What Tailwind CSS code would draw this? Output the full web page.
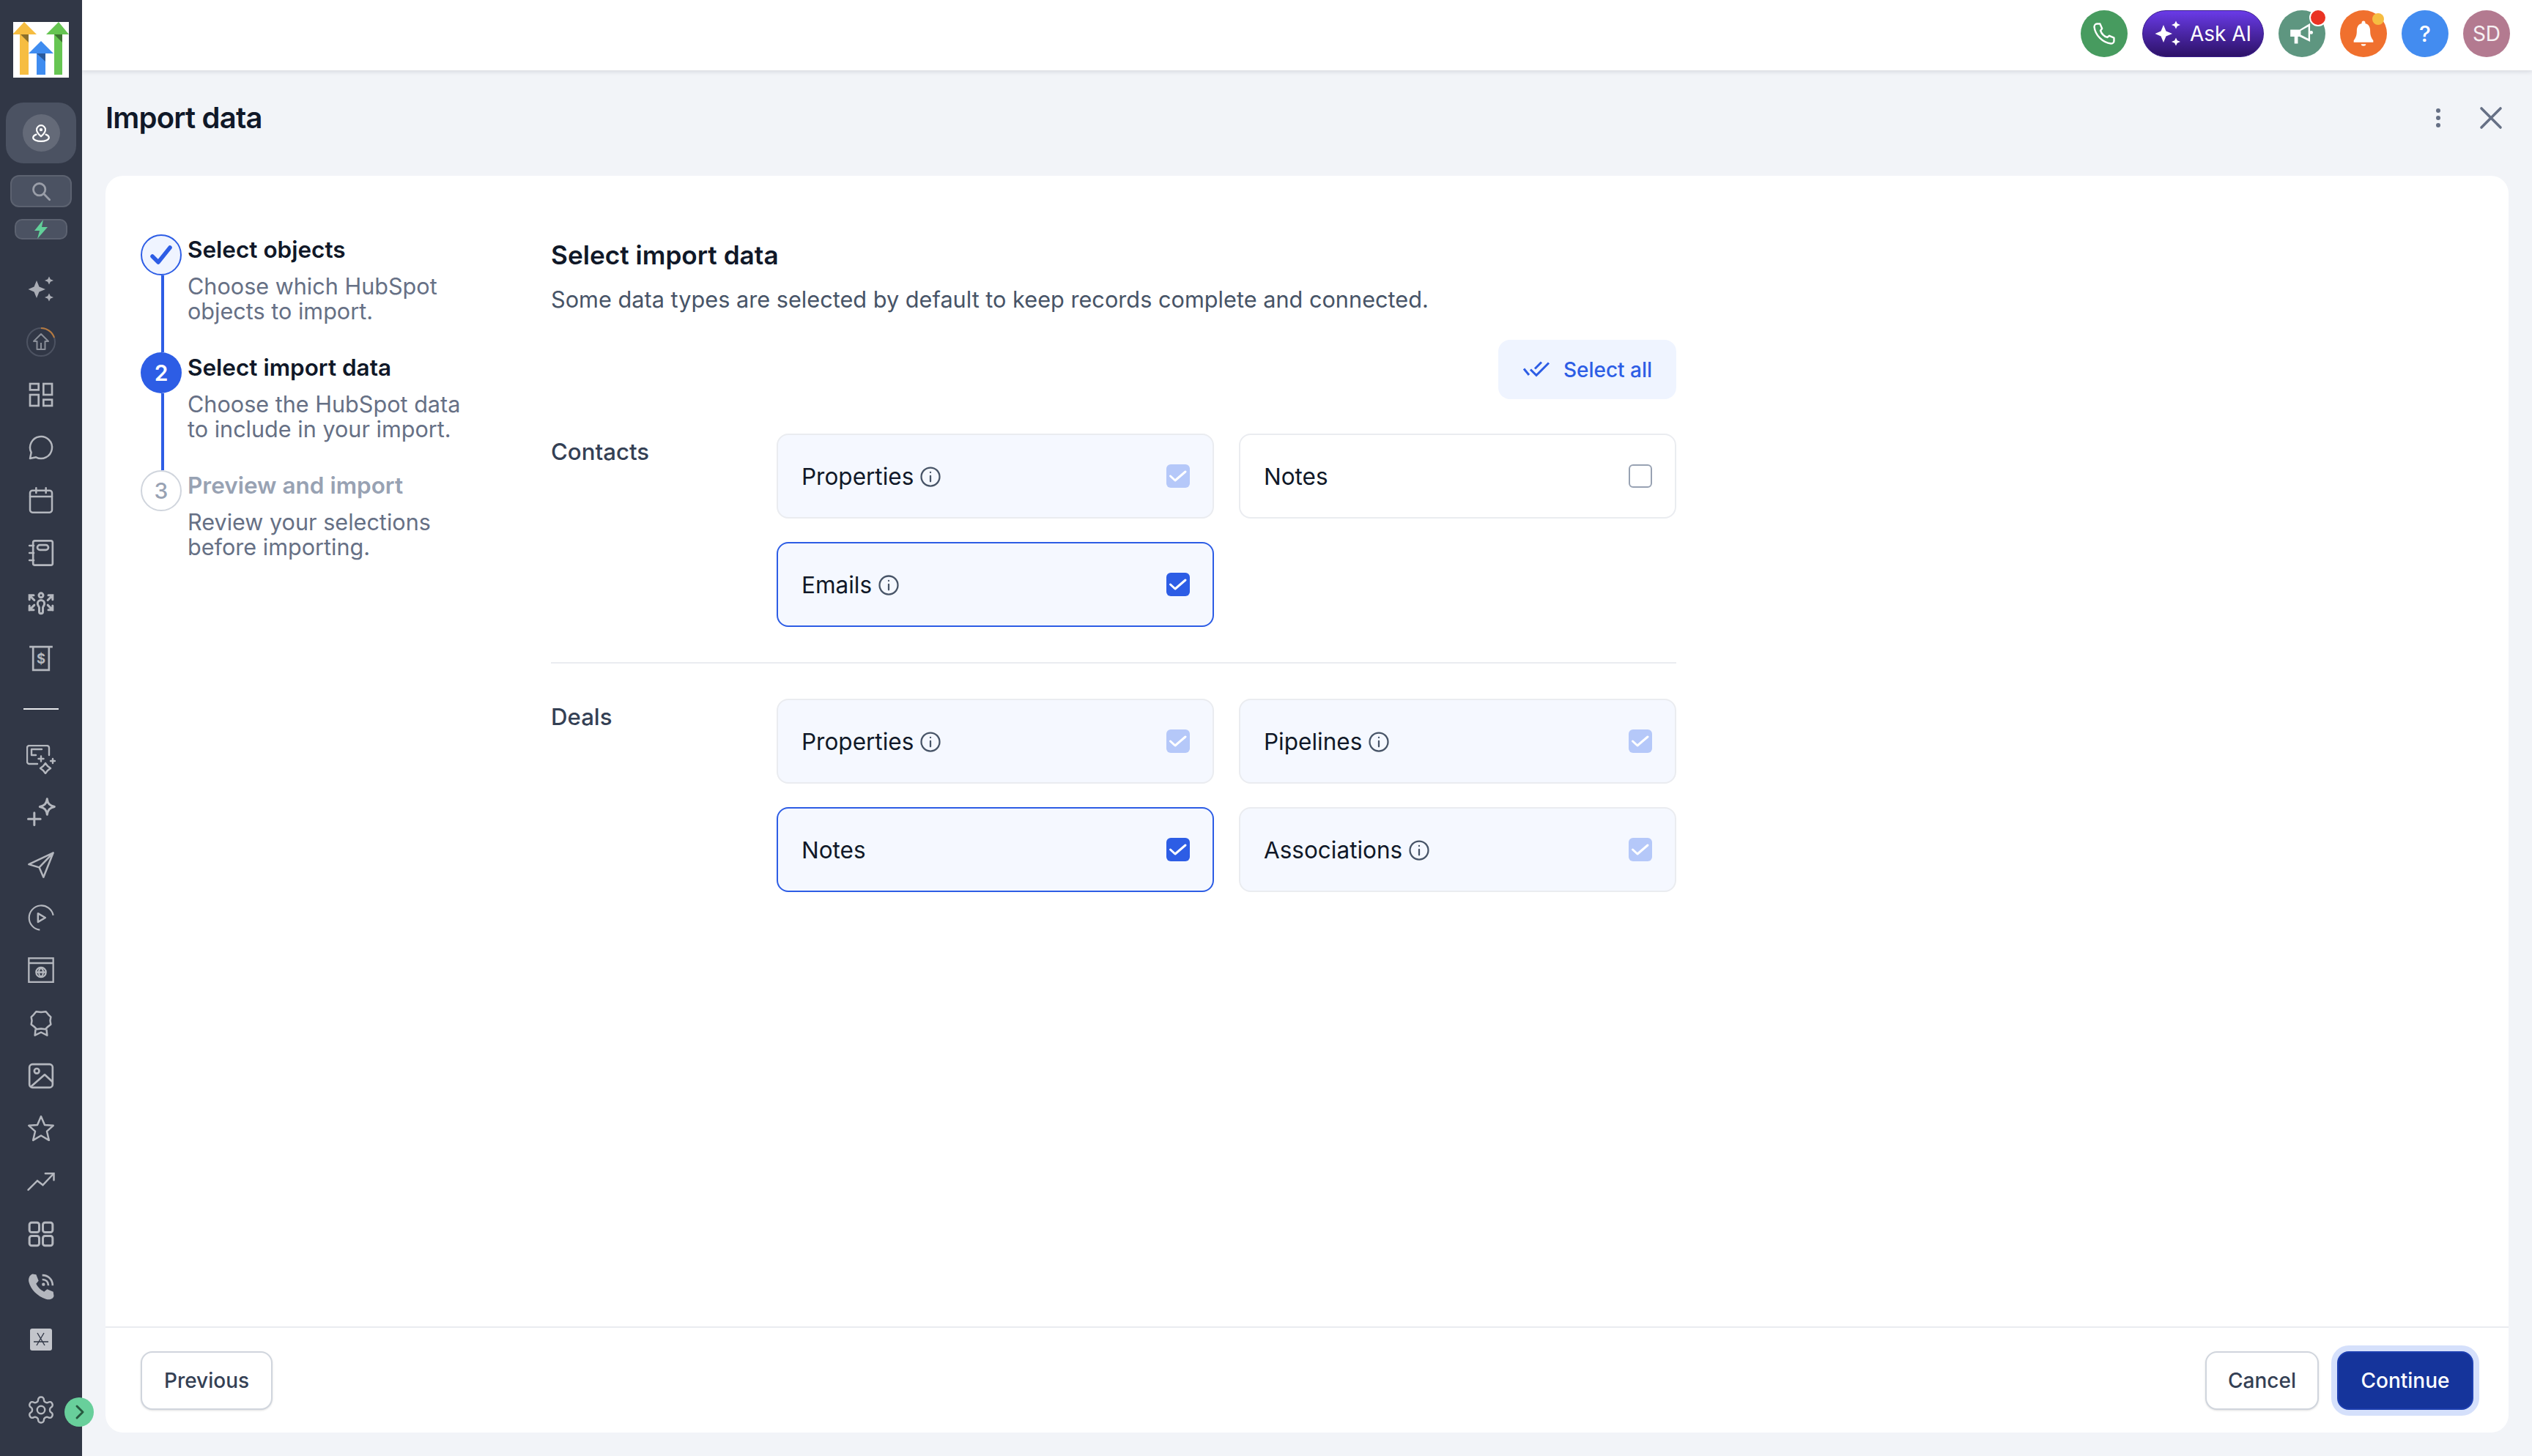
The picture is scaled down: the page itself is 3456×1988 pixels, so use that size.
<!DOCTYPE html>
<html lang="en">
<head>
  <meta charset="UTF-8" />
  <title>Import data</title>
  <script src="https://cdn.jsdelivr.net/npm/@tailwindcss/browser@4"></script>
</head>
<body class="w-[3456px] h-[1988px] overflow-hidden flex bg-[#f2f4f8] font-['Inter',sans-serif] text-[#101828]">

  <!-- sidebar -->
  <aside class="relative w-[112px] h-full shrink-0 bg-[#313746] flex flex-col items-center text-[#b4b7be]">
    <svg class="mt-[30px] w-[76px] h-[76px] shrink-0" viewBox="0 0 76 76">
      <rect width="76" height="76" fill="#fff"/>
      <path d="M15 0 L32 17 H21 V72 H9 V17 H-1 Z" fill="#f6bd41"/>
      <path d="M10 17 H21 V28 Z" fill="#8a6f2c"/>
      <path d="M38 26 L55 43 H44 V72 H32 V43 H21 Z" fill="#3f8cf0"/>
      <path d="M32 43 H44 V54 Z" fill="#2a5a9c"/>
      <path d="M62 0 L76 17 H67 V72 H56 V17 H45 Z" fill="#66c552"/>
      <path d="M56 17 H67 V28 Z" fill="#3c7431"/>
    </svg>
    <div class="mt-[34px] w-[96px] h-[83px] shrink-0 rounded-[24px] bg-[#4b5262] flex items-center justify-center">
      <div class="w-[51px] h-[51px] rounded-full bg-[#646a78] flex items-center justify-center">
        <svg class="w-[26px] h-[26px]" viewBox="0 0 24 24" fill="none" stroke="#fff" stroke-width="2" stroke-linecap="round" stroke-linejoin="round">
          <path d="M12 16 C9 13 6.5 11 6.5 7.5 a5.5 5.5 0 0 1 11 0 C17.500 11 15 13 12 16Z"/>
          <circle cx="12" cy="7.500" r="1" fill="#fff"/>
          <path d="M6 13.500 C3.500 14.500 2 15.800 2 17.500 C2 20 6.500 22 12 22 s10-2 10-4.500 c0-1.700-1.500-3-4-4"/>
        </svg>
      </div>
    </div>
    <div class="mt-[16px] w-[84px] h-[44px] shrink-0 rounded-[12px] bg-[#4b5262] border-2 border-[#5c6270] flex items-center justify-center">
      <svg class="w-[28px] h-[28px] text-[#9a9ea8]" viewBox="0 0 24 24" fill="none" stroke="currentColor" stroke-width="2.400" stroke-linecap="round"><circle cx="10" cy="10" r="7"/><path d="M15.500 15.500 L22 22"/></svg>
    </div>
    <div class="mt-[16px] w-[72px] h-[28px] shrink-0 rounded-[10px] bg-[#4b5262] border-2 border-[#5c6270] flex items-center justify-center">
      <svg class="w-[24px] h-[26px]" viewBox="0 0 24 26"><path d="M15 0 L3 15 H10 L7 26 L21 10 H13 Z" fill="#62cf99"/></svg>
    </div>

    <div class="mt-[32px] w-full flex flex-col items-center">
      <div class="h-[72px] w-full flex items-center justify-center">
        <svg class="w-[36px] h-[36px]" viewBox="0 0 36 36" fill="#aaadb5"><path d="M12 6 L15.500 14.500 L24 18 L15.500 21.500 L12 30 L8.500 21.500 L0.500 18 L8.500 14.500 Z"/><path d="M29 0.500 L30.800 4.200 L35 6 L30.800 7.800 L29 11.500 L27.200 7.800 L23 6 L27.200 4.200 Z"/><path d="M29 23.500 L30.800 27.200 L35 29 L30.800 30.800 L29 34.500 L27.200 30.800 L23 29 L27.200 27.200 Z"/></svg>
      </div>
      <div class="h-[72px] w-full flex items-center justify-center">
        <svg class="w-[42px] h-[42px]" viewBox="0 0 42 42" fill="none" stroke-width="2" stroke-linejoin="round"><circle cx="21" cy="21" r="19" stroke="#4d5362"/><path d="M21 2 A19 19 0 0 1 39 15" stroke="#b77a3f"/><path d="M21 10 L31 20 H26.500 V31 H15.500 V20 H11 Z M21 22 V31" stroke="#8a8e98"/></svg>
      </div>
      <div class="h-[72px] w-full flex items-center justify-center">
        <svg class="w-[40px] h-[40px]" viewBox="0 0 24 24" fill="none" stroke="currentColor" stroke-width="1.600"><rect x="3" y="3" width="7" height="5"/><rect x="14" y="3" width="7" height="9"/><rect x="14" y="16" width="7" height="5"/><rect x="3" y="12" width="7" height="9"/></svg>
      </div>
      <div class="h-[72px] w-full flex items-center justify-center">
        <svg class="w-[40px] h-[40px]" viewBox="0 0 24 24" fill="none" stroke="currentColor" stroke-width="1.500" stroke-linejoin="round"><path d="M7.900 20A9 9 0 1 0 4 16.100L3 21Z"/></svg>
      </div>
      <div class="h-[72px] w-full flex items-center justify-center">
        <svg class="w-[40px] h-[40px]" viewBox="0 0 24 24" fill="none" stroke="currentColor" stroke-width="1.500" stroke-linecap="round"><rect x="3" y="4" width="18" height="18" rx="2"/><path d="M8 2v4M16 2v4M3 9h18"/></svg>
      </div>
      <div class="h-[72px] w-full flex items-center justify-center">
        <svg class="w-[40px] h-[40px]" viewBox="0 0 24 24" fill="none" stroke="currentColor" stroke-width="1.600" stroke-linecap="round"><rect x="5.500" y="2" width="16" height="20" rx="1.500"/><path d="M2.500 6h3.500M2.500 12h3.500M2.500 18h3.500"/><rect x="9" y="5.500" width="9" height="4" rx="2"/></svg>
      </div>
      <div class="h-[72px] w-full flex items-center justify-center">
        <svg class="w-[40px] h-[40px]" viewBox="0 0 24 24" fill="none" stroke="currentColor" stroke-width="1.800" stroke-linecap="round"><circle cx="12" cy="3.500" r="1.800"/><path d="M12 7.500 a2.800 2.800 0 0 1 2.800 2.800 c0 1.700-1.300 2.400-1.300 3.200 v3.500 a1.500 1.500 0 0 1-3 0 v-3.500 c0-.8-1.300-1.500-1.300-3.200 a2.800 2.800 0 0 1 2.800-2.800z"/><path d="M6.500 7.500 L2.500 3.500 M2.500 7 V3.500 H6 M17.500 7.500 L21.500 3.500 M21.500 7 V3.500 H18 M6.500 11.500 L2.500 15.500 M2.500 12 V15.500 H6 M17.500 11.500 L21.500 15.500 M21.500 12 V15.500 H18"/></svg>
      </div>
      <div class="h-[72px] w-full flex items-center justify-center">
        <svg class="w-[40px] h-[40px]" viewBox="0 0 24 24" fill="none" stroke="currentColor" stroke-width="1.600"><path d="M2.500 2.500H21.500M5.500 2.500V21.500H18.500V2.500"/><text x="12" y="16" text-anchor="middle" font-size="11" font-weight="700" font-family="Inter" fill="currentColor" stroke="none">$</text></svg>
      </div>
    </div>

    <div class="mt-[32px] w-[48px] h-[2px] shrink-0 bg-[#e8e9ec]"></div>

    <div class="mt-[32px] w-full flex flex-col items-center">
      <div class="h-[72px] w-full flex items-center justify-center">
        <svg class="w-[40px] h-[40px]" viewBox="0 0 40 40" fill="none" stroke="currentColor" stroke-width="2.400" stroke-linecap="round" stroke-linejoin="round"><path d="M15 26H4a3 3 0 0 1-3-3V4a3 3 0 0 1 3-3H28a3 3 0 0 1 3 3V14"/><path d="M7 14V6H21M7 14H13"/><path d="M20 15.500v7M16.500 19h7M36 19v6M33 22h6"/><path d="M26 25 L29 29 L33 32 L29 35 L26 39 L23 35 L19 32 L23 29Z"/></svg>
      </div>
      <div class="h-[72px] w-full flex items-center justify-center">
        <svg class="w-[40px] h-[40px]" viewBox="0 0 24 24" fill="none" stroke="currentColor" stroke-width="1.800" stroke-linejoin="round" stroke-linecap="round"><path d="M17 1.500 c.6 3.500 2 5 6 6 c-4 1-5.400 2.500-6 6.500 c-.6-4-2-5.500-6-6.500 c4-1 5.400-2.500 6-6.500z"/><path d="M6.500 12.500v10M1.500 17.500h10"/></svg>
      </div>
      <div class="h-[72px] w-full flex items-center justify-center">
        <svg class="w-[40px] h-[40px]" viewBox="0 0 24 24" fill="none" stroke="currentColor" stroke-width="1.500" stroke-linejoin="round"><path d="M22 2 L2 11.500 L10.500 14 L14 22 Z M22 2 L10.500 14"/></svg>
      </div>
      <div class="h-[72px] w-full flex items-center justify-center">
        <svg class="w-[40px] h-[40px]" viewBox="0 0 24 24" fill="none" stroke="currentColor" stroke-width="1.300" stroke-linejoin="round"><path d="M22 10 A10 10 0 1 0 11 22"/><path d="M9.500 8.500 L15.500 12 L9.500 15.500 Z" stroke-width="1.500"/></svg>
      </div>
      <div class="h-[72px] w-full flex items-center justify-center">
        <svg class="w-[40px] h-[40px]" viewBox="0 0 24 24" fill="none" stroke="currentColor" stroke-width="1.400"><rect x="2" y="2" width="20" height="19.500"/><path d="M2 6h20"/><circle cx="12" cy="13.500" r="4"/><path d="M8 13.500h8M12 9.500c-2.400 2.500-2.400 5.500 0 8M12 9.500c2.400 2.500 2.400 5.500 0 8"/></svg>
      </div>
      <div class="h-[72px] w-full flex items-center justify-center">
        <svg class="w-[40px] h-[40px]" viewBox="0 0 24 24" fill="none" stroke="currentColor" stroke-width="1.500" stroke-linejoin="round"><path d="M8 2.500 L12 3 L16 2.500 L18 5 L20 7 L19.500 10 L20 13 L17.500 15 L15.500 17 L12 16.500 L8.500 17 L6.500 15 L4 13 L4.500 10 L4 7 L6 5 Z"/><path d="M7.500 17 L7 22 L12 19.500 L17 22 L16.500 17"/></svg>
      </div>
      <div class="h-[72px] w-full flex items-center justify-center">
        <svg class="w-[40px] h-[40px]" viewBox="0 0 24 24" fill="none" stroke="currentColor" stroke-width="1.600" stroke-linejoin="round"><rect x="2.500" y="2.500" width="19" height="19" rx="2.500"/><circle cx="8.500" cy="8" r="2"/><path d="M3.500 21 L15 11 L21.500 17"/></svg>
      </div>
      <div class="h-[72px] w-full flex items-center justify-center">
        <svg class="w-[40px] h-[40px]" viewBox="0 0 24 24" fill="none" stroke="currentColor" stroke-width="1.500" stroke-linejoin="round"><path d="M12 2 L15 9 L22 9.500 L16.800 14.200 L18.500 21.500 L12 17.700 L5.500 21.500 L7.200 14.200 L2 9.500 L9 9 Z"/></svg>
      </div>
      <div class="h-[72px] w-full flex items-center justify-center">
        <svg class="w-[40px] h-[40px]" viewBox="0 0 24 24" fill="none" stroke="currentColor" stroke-width="1.500" stroke-linecap="round"><path d="M1.500 19 L9 11.500 L13.500 15 L22 6"/><path d="M15.500 5.500 H22.500 V11"/></svg>
      </div>
      <div class="h-[72px] w-full flex items-center justify-center">
        <svg class="w-[40px] h-[40px]" viewBox="0 0 24 24" fill="none" stroke="currentColor" stroke-width="1.800"><rect x="2.500" y="2.500" width="8" height="8" rx="1.800"/><rect x="13.500" y="2.500" width="8" height="8" rx="1.800"/><rect x="2.500" y="13.500" width="8" height="8" rx="1.800"/><rect x="13.500" y="13.500" width="8" height="8" rx="1.800"/></svg>
      </div>
      <div class="h-[72px] w-full flex items-center justify-center">
        <svg class="w-[40px] h-[40px]" viewBox="0 0 24 24" fill="currentColor"><path d="M5 1.500 L8 2 L10 7 L8 9.500 C9 12 11.500 14.500 14.500 16 L17 14 L22 16 L22.500 19.500 C22 22 19 23 16 22 C9 20 3.500 14 2 8 C1.500 5 2.500 2.500 5 1.500Z"/><path d="M13 2.500 C18 2.500 21.500 6 21.500 11 M13 6 C16 6 18 8 18 11" fill="none" stroke="currentColor" stroke-width="1.600"/><circle cx="14" cy="10" r="1.300"/></svg>
      </div>
      <div class="h-[72px] w-full flex items-center justify-center">
        <svg class="w-[30px] h-[30px]" viewBox="0 0 30 30"><rect width="30" height="30" rx="3" fill="#c3c5cb"/><path d="M10 6 L20 23 M19 6 L9 23 M5 18 H25" stroke="#313746" stroke-width="1.400" fill="none"/></svg>
      </div>
    </div>

    <div class="mt-[39px]">
      <svg class="w-[42px] h-[42px]" viewBox="0 0 24 24" fill="none" stroke="currentColor" stroke-width="1.400" stroke-linejoin="round"><path d="M12.220 2h-.44a2 2 0 0 0-2 2v.18a2 2 0 0 1-1 1.730l-.43.25a2 2 0 0 1-2 0l-.15-.08a2 2 0 0 0-2.730.73l-.22.380a2 2 0 0 0 .730 2.730l.150.100a2 2 0 0 1 1 1.720v.510a2 2 0 0 1-1 1.740l-.150.090a2 2 0 0 0-.730 2.730l.220.380a2 2 0 0 0 2.730.730l.150-.080a2 2 0 0 1 2 0l.430.250a2 2 0 0 1 1 1.730V20a2 2 0 0 0 2 2h.440a2 2 0 0 0 2-2v-.180a2 2 0 0 1 1-1.730l.430-.250a2 2 0 0 1 2 0l.150.080a2 2 0 0 0 2.730-.730l.220-.390a2 2 0 0 0-.730-2.730l-.150-.080a2 2 0 0 1-1-1.740v-.500a2 2 0 0 1 1-1.740l.150-.090a2 2 0 0 0 .730-2.730l-.220-.380a2 2 0 0 0-2.730-.730l-.150.080a2 2 0 0 1-2 0l-.430-.250a2 2 0 0 1-1-1.730V4a2 2 0 0 0-2-2z"/><circle cx="12" cy="12" r="3"/></svg>
    </div>
    <div class="absolute left-[88px] top-[1908px] w-[40px] h-[40px] rounded-full bg-[#68cf9b] flex items-center justify-center">
      <svg class="w-[24px] h-[24px]" viewBox="0 0 24 24" fill="none" stroke="#27583f" stroke-width="3" stroke-linecap="round" stroke-linejoin="round"><path d="M9 4l8 8-8 8"/></svg>
    </div>
  </aside>

  <!-- main -->
  <main class="flex-1 min-w-0 flex flex-col">
    <header class="h-[96px] shrink-0 bg-white shadow-[0_2px_6px_rgba(16,24,40,0.12)] flex items-center justify-end gap-[20px] pr-[30px] pb-[4px]">
      <div class="w-[64px] h-[64px] rounded-full bg-[#479b5f] flex items-center justify-center">
        <svg class="w-[34px] h-[34px]" viewBox="0 0 24 24" fill="none" stroke="#fff" stroke-width="1.700" stroke-linejoin="round"><path d="M5 2.500 L8 2.500 L10 7 L8.500 9 C9.500 12 12 14.500 15 15.500 L17 14 L21.500 16 V19 C21.500 20.500 20 21.500 18.500 21.500 C10.500 20.500 3.500 13.500 2.500 5.500 C2.500 4 3.500 2.500 5 2.500Z"/></svg>
      </div>
      <div class="w-[166px] h-[64px] rounded-full border border-[#3a1d8c] bg-gradient-to-b from-[#6a3be8] to-[#2d1268] flex items-center justify-center gap-[12px] text-white text-[28px]">
        <svg class="w-[36px] h-[36px]" viewBox="0 0 36 36" fill="#fff"><path d="M12 6 L15.500 14.500 L24 18 L15.500 21.500 L12 30 L8.500 21.500 L0.500 18 L8.500 14.500 Z"/><path d="M29 0.500 L30.800 4.200 L35 6 L30.800 7.800 L29 11.500 L27.200 7.800 L23 6 L27.200 4.200 Z"/><path d="M29 23.500 L30.800 27.200 L35 29 L30.800 30.800 L29 34.500 L27.200 30.800 L23 29 L27.200 27.200 Z"/></svg>
        <span>Ask AI</span>
      </div>
      <div class="relative w-[64px] h-[64px] rounded-full bg-[#5e9680] flex items-center justify-center">
        <svg class="w-[38px] h-[38px]" viewBox="0 0 24 24" fill="#fff"><path d="M2 8.500 H10 L19 3 V19 L10 14.500 H8.500 V20.500 H5.500 V14.500 H2 Z"/><path d="M11 9.500 L17.500 5.800 V16.200 L11 13 Z" fill="#5e9680"/><circle cx="20" cy="11" r="1.500"/></svg>
        <div class="absolute left-[42px] top-[-2px] w-[24px] h-[24px] rounded-full bg-[#ea3323] border-2 border-white"></div>
      </div>
      <div class="relative w-[64px] h-[64px] rounded-full bg-[#f0702e] flex items-center justify-center">
        <svg class="w-[40px] h-[40px]" viewBox="0 0 24 24" fill="#fff"><circle cx="12" cy="3" r="1.500"/><path d="M12 3.500 C7.500 3.500 6.500 7 6.500 10 C6.500 13.500 5.500 15.500 4 17.500 V19 H20 V17.500 C18.500 15.500 17.500 13.500 17.500 10 C17.500 7 16.500 3.500 12 3.500Z"/><path d="M10 20.500 H14 C14 22.500 10 22.500 10 20.500Z"/></svg>
        <div class="absolute left-[44px] top-[4px] w-[16px] h-[16px] rounded-full bg-[#f6bd41]"></div>
      </div>
      <div class="w-[64px] h-[64px] rounded-full bg-[#438cf0] flex items-center justify-center text-white text-[30px] font-medium">?</div>
      <div class="w-[64px] h-[64px] rounded-full bg-[#b37a90] flex items-center justify-center text-white/90 text-[28px]">SD</div>
    </header>

    <div class="h-[144px] shrink-0 flex items-center pl-[32px] pr-[40px] pb-[14px]">
      <h1 class="flex-1 text-[40px] leading-[48px] font-semibold -tracking-[0.8px]">Import data</h1>
      <svg class="w-[10px] h-[28px] mr-[51px]" viewBox="0 0 10 28" fill="#667085"><circle cx="5" cy="4" r="3"/><circle cx="5" cy="14" r="3"/><circle cx="5" cy="24" r="3"/></svg>
      <svg class="w-[32px] h-[32px]" viewBox="0 0 32 32" fill="none" stroke="#667085" stroke-width="3.600" stroke-linecap="round"><path d="M3 3 L29 29 M29 3 L3 29"/></svg>
    </div>

    <!-- card -->
    <section class="ml-[32px] mr-[32px] mb-[32px] flex-1 min-h-0 bg-white rounded-[24px] flex flex-col">
      <div class="flex-1 min-h-0 flex">
        <!-- steps -->
        <ol class="w-[608px] shrink-0 pl-[48px] pt-[80px]">
          <li class="h-[161px] flex gap-[8px]">
            <div class="w-[56px] flex flex-col shrink-0">
              <div class="w-[56px] h-[56px] rounded-full border-2 border-[#2d5de5] bg-[#eff4ff] flex items-center justify-center">
                <svg class="w-[30px] h-[26px]" viewBox="0 0 30 26" fill="none" stroke="#2d5de5" stroke-width="5.500" stroke-linecap="round" stroke-linejoin="round"><path d="M3 15 L11 23 L27 3"/></svg>
              </div>
              <div class="ml-[28px] w-[4px] flex-1 bg-[#2d5de5]"></div>
            </div>
            <div class="w-[400px]">
              <h3 class="text-[31.500px] leading-[42px] font-semibold">Select objects</h3>
              <p class="mt-[12px] text-[30.600px] leading-[34px] text-[#667085]">Choose which HubSpot objects to import.</p>
            </div>
          </li>
          <li class="h-[161px] flex gap-[8px]">
            <div class="w-[56px] flex flex-col shrink-0">
              <div class="w-[56px] h-[56px] rounded-full bg-[#2d5de5] flex items-center justify-center text-white text-[30px] font-semibold">2</div>
              <div class="ml-[28px] w-[4px] flex-1 bg-[#2d5de5]"></div>
            </div>
            <div class="w-[400px]">
              <h3 class="text-[31.500px] leading-[42px] font-semibold">Select import data</h3>
              <p class="mt-[12px] text-[30.600px] leading-[34px] text-[#667085]">Choose the HubSpot data to include in your import.</p>
            </div>
          </li>
          <li class="flex gap-[8px]">
            <div class="w-[56px] h-[56px] shrink-0 rounded-full border-2 border-[#d0d5dd] flex items-center justify-center text-[#98a2b3] text-[30px] font-medium">3</div>
            <div class="w-[400px]">
              <h3 class="text-[31.500px] leading-[42px] font-semibold text-[#98a2b3]">Preview and import</h3>
              <p class="mt-[12px] text-[30.600px] leading-[34px] text-[#667085]">Review your selections before importing.</p>
            </div>
          </li>
        </ol>

        <!-- form -->
        <div class="w-[1536px] pt-[84px]">
          <h2 class="text-[35.200px] leading-[48px] font-semibold">Select import data</h2>
          <p class="mt-[17px] text-[30.700px] leading-[40px] text-[#475467]">Some data types are selected by default to keep records complete and connected.</p>
          <div class="mt-[35px] flex justify-end">
            <button class="w-[243px] h-[81px] rounded-[16px] bg-[#eff4ff] flex items-center justify-center gap-[18px] text-[#2d5de5] text-[28px] font-medium">
              <svg class="w-[38px] h-[24px]" viewBox="0 0 38 24" fill="none" stroke="#2d5de5" stroke-width="3"><path d="M2 10.500 L9 19 M11 11.500 L19 19.500 L36 2.500 M17 10.500 L26 1.500"/></svg>
              <span>Select all</span>
            </button>
          </div>

          <!-- contacts -->
          <div class="mt-[47px] flex pb-[48px] border-b-2 border-[#eaecf0]">
            <div class="w-[308px] shrink-0 pt-[5px] text-[31.200px] leading-[40px] font-medium text-[#344054]">Contacts</div>
            <div class="flex-1 grid grid-cols-2 gap-x-[34px] gap-y-[32px]">
              <div class="h-[116px] rounded-[16px] border-2 border-[#eaecf0] bg-[#f5f8ff] flex items-center justify-between pl-[32px] pr-[31px]">
                <div class="flex items-center gap-[8px] text-[31.500px] pt-[2px]"><span>Properties</span>
                  <svg class="w-[30px] h-[30px]" viewBox="0 0 24 24" fill="none" stroke="#475467" stroke-width="1.800" stroke-linecap="round"><circle cx="12" cy="12" r="10"/><path d="M12 11v6M12 7v.2"/></svg>
                </div>
                <div class="w-[32px] h-[32px] rounded-[6px] bg-[#b5c8f9]">
                  <svg class="w-[32px] h-[32px]" viewBox="0 0 32 32" fill="none" stroke="#fff" stroke-width="3" stroke-linecap="round" stroke-linejoin="round"><path d="M5.500 16 L12 22 L26 10"/></svg>
                </div>
              </div>
              <div class="h-[116px] rounded-[16px] border-2 border-[#eaecf0] bg-white flex items-center justify-between pl-[32px] pr-[31px]">
                <span class="text-[31.500px] pt-[2px]">Notes</span>
                <div class="w-[32px] h-[32px] rounded-[6px] border-2 border-[#98a2b3] bg-white"></div>
              </div>
              <div class="h-[116px] rounded-[16px] border-2 border-[#2d5de5] bg-[#f5f8ff] flex items-center justify-between pl-[32px] pr-[31px]">
                <div class="flex items-center gap-[8px] text-[31.500px] pt-[2px]"><span>Emails</span>
                  <svg class="w-[30px] h-[30px]" viewBox="0 0 24 24" fill="none" stroke="#475467" stroke-width="1.800" stroke-linecap="round"><circle cx="12" cy="12" r="10"/><path d="M12 11v6M12 7v.2"/></svg>
                </div>
                <div class="w-[32px] h-[32px] rounded-[6px] bg-[#2d5de5]">
                  <svg class="w-[32px] h-[32px]" viewBox="0 0 32 32" fill="none" stroke="#fff" stroke-width="3" stroke-linecap="round" stroke-linejoin="round"><path d="M5.500 16 L12 22 L26 10"/></svg>
                </div>
              </div>
            </div>
          </div>

          <!-- deals -->
          <div class="mt-[48px] flex">
            <div class="w-[308px] shrink-0 pt-[5px] text-[31.200px] leading-[40px] font-medium text-[#344054]">Deals</div>
            <div class="flex-1 grid grid-cols-2 gap-x-[34px] gap-y-[32px]">
              <div class="h-[116px] rounded-[16px] border-2 border-[#eaecf0] bg-[#f5f8ff] flex items-center justify-between pl-[32px] pr-[31px]">
                <div class="flex items-center gap-[8px] text-[31.500px] pt-[2px]"><span>Properties</span>
                  <svg class="w-[30px] h-[30px]" viewBox="0 0 24 24" fill="none" stroke="#475467" stroke-width="1.800" stroke-linecap="round"><circle cx="12" cy="12" r="10"/><path d="M12 11v6M12 7v.2"/></svg>
                </div>
                <div class="w-[32px] h-[32px] rounded-[6px] bg-[#b5c8f9]">
                  <svg class="w-[32px] h-[32px]" viewBox="0 0 32 32" fill="none" stroke="#fff" stroke-width="3" stroke-linecap="round" stroke-linejoin="round"><path d="M5.500 16 L12 22 L26 10"/></svg>
                </div>
              </div>
              <div class="h-[116px] rounded-[16px] border-2 border-[#eaecf0] bg-[#f5f8ff] flex items-center justify-between pl-[32px] pr-[31px]">
                <div class="flex items-center gap-[8px] text-[31.500px] pt-[2px]"><span>Pipelines</span>
                  <svg class="w-[30px] h-[30px]" viewBox="0 0 24 24" fill="none" stroke="#475467" stroke-width="1.800" stroke-linecap="round"><circle cx="12" cy="12" r="10"/><path d="M12 11v6M12 7v.2"/></svg>
                </div>
                <div class="w-[32px] h-[32px] rounded-[6px] bg-[#b5c8f9]">
                  <svg class="w-[32px] h-[32px]" viewBox="0 0 32 32" fill="none" stroke="#fff" stroke-width="3" stroke-linecap="round" stroke-linejoin="round"><path d="M5.500 16 L12 22 L26 10"/></svg>
                </div>
              </div>
              <div class="h-[116px] rounded-[16px] border-2 border-[#2d5de5] bg-[#f5f8ff] flex items-center justify-between pl-[32px] pr-[31px]">
                <span class="text-[31.500px] pt-[2px]">Notes</span>
                <div class="w-[32px] h-[32px] rounded-[6px] bg-[#2d5de5]">
                  <svg class="w-[32px] h-[32px]" viewBox="0 0 32 32" fill="none" stroke="#fff" stroke-width="3" stroke-linecap="round" stroke-linejoin="round"><path d="M5.500 16 L12 22 L26 10"/></svg>
                </div>
              </div>
              <div class="h-[116px] rounded-[16px] border-2 border-[#eaecf0] bg-[#f5f8ff] flex items-center justify-between pl-[32px] pr-[31px]">
                <div class="flex items-center gap-[8px] text-[31.500px] pt-[2px]"><span>Associations</span>
                  <svg class="w-[30px] h-[30px]" viewBox="0 0 24 24" fill="none" stroke="#475467" stroke-width="1.800" stroke-linecap="round"><circle cx="12" cy="12" r="10"/><path d="M12 11v6M12 7v.2"/></svg>
                </div>
                <div class="w-[32px] h-[32px] rounded-[6px] bg-[#b5c8f9]">
                  <svg class="w-[32px] h-[32px]" viewBox="0 0 32 32" fill="none" stroke="#fff" stroke-width="3" stroke-linecap="round" stroke-linejoin="round"><path d="M5.500 16 L12 22 L26 10"/></svg>
                </div>
              </div>
            </div>
          </div>
        </div>
      </div>

      <footer class="h-[145px] shrink-0 border-t-2 border-[#eaecf0] flex items-center justify-between pl-[48px] pr-[48px]">
        <button class="w-[180px] h-[80px] rounded-[16px] border-2 border-[#d0d5dd] bg-white shadow-sm text-[28px] font-medium text-[#344054]">Previous</button>
        <div class="flex items-center gap-[25px]">
          <button class="w-[155px] h-[80px] rounded-[16px] border-2 border-[#d0d5dd] bg-white shadow-sm text-[28px] font-medium text-[#344054]">Cancel</button>
          <button class="w-[186px] h-[80px] rounded-[16px] border-2 border-[#1d3fb0] bg-[#15349b] ring-8 ring-[#d5e0fb] text-[28px] font-medium text-white">Continue</button>
        </div>
      </footer>
    </section>
  </main>
</body>
</html>
